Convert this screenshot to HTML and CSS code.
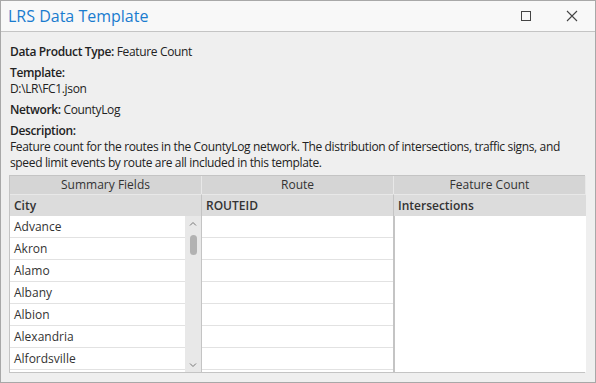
FILE: index.html
```html
<!DOCTYPE html>
<html lang="en">
<head>
    <meta charset="UTF-8">
    <title>LRS Data Template</title>
    <link rel="stylesheet" href="styles.css">
</head>
<body>
    <div class="window">
        <div class="titlebar">
            <span class="title">LRS Data Template</span>
            <div class="controls">
                <span class="ctl"><svg width="12" height="12" viewBox="0 0 12 12"><rect x="1.5" y="1.5" width="9" height="9" fill="none" stroke="#444" stroke-width="1"/></svg></span>
                <span class="ctl"><svg width="12" height="12" viewBox="0 0 12 12"><path d="M1 1L11 11M11 1L1 11" stroke="#444" stroke-width="1.1"/></svg></span>
            </div>
        </div>

        <div class="content">
            <p class="field"><b>Data Product Type:</b> Feature Count</p>
            <p class="field"><b>Template:</b><br>D:\LR\FC1.json</p>
            <p class="field"><b>Network:</b> CountyLog</p>
            <p class="field desc"><b>Description:</b><br>Feature count for the routes in the CountyLog network. The distribution of intersections, traffic signs, and speed limit events by route are all included in this template.</p>

            <div class="grid">
                <div class="head">Summary Fields</div>
                <div class="head">Route</div>
                <div class="head">Feature Count</div>

                <div class="col">
                    <div class="sub">City</div>
                    <div class="listwrap">
                        <div class="list">
                            <div class="row">Advance</div>
                            <div class="row">Akron</div>
                            <div class="row">Alamo</div>
                            <div class="row">Albany</div>
                            <div class="row">Albion</div>
                            <div class="row">Alexandria</div>
                            <div class="row">Alfordsville</div>
                        </div>
                        <div class="scrollbar">
                            <svg width="8" height="6" viewBox="0 0 8 6"><path d="M1 4.5L4 1.5L7 4.5" fill="none" stroke="#777" stroke-width="1"/></svg>
                            <div class="thumb"></div>
                            <div class="spacer"></div>
                            <svg width="8" height="6" viewBox="0 0 8 6"><path d="M1 1.5L4 4.5L7 1.5" fill="none" stroke="#777" stroke-width="1"/></svg>
                        </div>
                    </div>
                </div>

                <div class="col">
                    <div class="sub">ROUTEID</div>
                    <div class="list">
                        <div class="row"></div>
                        <div class="row"></div>
                        <div class="row"></div>
                        <div class="row"></div>
                        <div class="row"></div>
                        <div class="row"></div>
                        <div class="row"></div>
                    </div>
                </div>

                <div class="col">
                    <div class="sub">Intersections</div>
                    <div class="blank"></div>
                </div>
            </div>
        </div>
    </div>
</body>
</html>
```

FILE: styles.css
```css
body {
    margin: 0;
    font-family: "Open Sans", "Noto Sans", sans-serif;
    font-size: 12px;
    color: #222;
}

.window {
    width: 596px;
    height: 383px;
    box-sizing: border-box;
    border: 1px solid #a8a8a8;
    background: #efefef;
    display: flex;
    flex-direction: column;
}

.titlebar {
    height: 30px;
    background: #f8f8f8;
    border-bottom: 1px solid #c4c4c4;
    display: flex;
    align-items: center;
    justify-content: space-between;
    padding: 0 0 0 7px;
}

.title {
    font-size: 16px;
    color: #1a7ccf;
}

.controls {
    display: flex;
    height: 100%;
}

.ctl {
    width: 46px;
    display: flex;
    align-items: center;
    justify-content: center;
}

.content {
    padding: 12px 10px 0 8px;
    flex: 1;
    display: flex;
    flex-direction: column;
}

.field {
    margin: 0 0 5px 1px;
    line-height: 16px;
    letter-spacing: -0.35px;
}

.field.desc {
    margin-bottom: 4px;
}

.field b {
    font-weight: 600;
}

.grid {
    display: grid;
    grid-template-columns: 192px 192px 192px;
    grid-template-rows: 18px 1fr;
    border: 1px solid #c4c4c4;
    margin-bottom: 9px;
    flex: 1;
    background: #e4e4e4;
}

.head {
    background: #d5d5d5;
    text-align: center;
    line-height: 18px;
    color: #333;
    border-right: 1px solid #e8e8e8;
}

.col {
    display: flex;
    flex-direction: column;
    border-right: 1px solid #c4c4c4;
    border-top: 1px solid #e8e8e8;
}

.col:last-child {
    border-right: none;
}

.sub {
    height: 21px;
    line-height: 21px;
    background: #dcdcdc;
    font-weight: 600;
    padding-left: 4px;
    color: #333;
}

.listwrap {
    display: flex;
    flex: 1;
}

.list {
    flex: 1;
    background: #fff;
}

.row {
    height: 21px;
    line-height: 21px;
    border-bottom: 1px solid #e2e2e2;
    padding-left: 4px;
    color: #333;
}

.scrollbar {
    width: 16px;
    background: #e8e8e8;
    display: flex;
    flex-direction: column;
    align-items: center;
    padding: 5px 0 4px;
}

.thumb {
    width: 7px;
    height: 20px;
    border-radius: 4px;
    background: #b2b2b2;
    margin-top: 8px;
}

.spacer {
    flex: 1;
}

.blank {
    flex: 1;
    background: #fff;
    border-left: 1px solid #c4c4c4;
}
```
